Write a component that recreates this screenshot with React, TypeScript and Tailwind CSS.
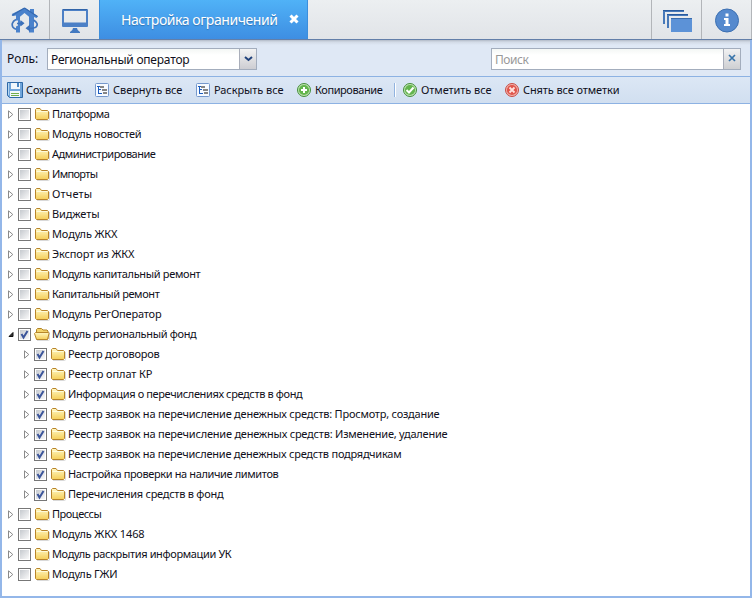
import { useLayoutEffect, useRef, useState } from 'react';

/* Text whose tracking is adjusted so that it fills a given width. */
function Label({ text, width, className = '' }: { text: string; width: number; className?: string }) {
  const ref = useRef<HTMLSpanElement>(null);
  const [spacing, setSpacing] = useState(0);
  useLayoutEffect(() => {
    const el = ref.current;
    if (!el) return;
    el.style.letterSpacing = '0px';
    const natural = el.getBoundingClientRect().width;
    const next = (width - 0.6 - natural) / text.length;
    el.style.letterSpacing = `${next}px`;
    setSpacing(next);
  }, [text, width]);
  return (
    <span className="inline-block shrink-0" style={{ width }}>
      <span ref={ref} className={`block w-max whitespace-pre ${className}`} style={{ letterSpacing: spacing }}>
        {text}
      </span>
    </span>
  );
}

function HouseIcon() {
  return (
    <svg width="28" height="27" viewBox="0 0 28 27" className="shrink-0">
      <path
        fill="#4a82cc"
        d="M.8 7 13.500 .8 19 4.300V2h4v4.800L27 9.500 25.500 11 23 10v15.500h-5V23l-2.500-1.800L18 19.200V9.800L13.500 6 9 9.800V14l4 2.300L9 19v6.500H5V19.500l2-1V13.500H5V8.500L2.200 9z"
      />
      <path d="M13.500 1 1 8.500M13.500 1 26.500 9.500" stroke="#3569b0" strokeWidth="1.200" fill="none" />
      <path d="M5 12.500C1 14.500 .5 18 2 20.200q1 1.300 3 2M6 16.500h5M22.500 13c3.500 2 4.500 4.500 3 6.500q-1.500 2-7.500 1.800" fill="none" stroke="#3f74bc" strokeWidth="1.700" />
      <path d="m9.500 13 4 3.300-4 3.200zM19 17.500l-4.500 3.700 4.500 3.300z" fill="#3b70ba" />
    </svg>
  );
}

function MonitorIcon() {
  return (
    <svg width="26" height="25" viewBox="0 0 26 25" className="shrink-0">
      <path fillRule="evenodd" fill="#4c80c6" d="M1 0h24q1 0 1 1v16q0 1-1 1H1q-1 0-1-1V1q0-1 1-1zm1 2v11.500h22V2z" />
      <path d="M1 .5h24" stroke="#3264a8" />
      <path fill="#4279c1" d="M11 19h4q0 2.500 3 4v1H8v-1q3-1.500 3-4z" />
    </svg>
  );
}

function WindowsIcon() {
  return (
    <svg width="30" height="24" viewBox="0 0 30 24" className="shrink-0">
      <path d="M1 14V1h20M5 18V5h20" fill="none" stroke="#4779b9" strokeWidth="2" />
      <path d="M0 .5h21M4 4.500h21" stroke="#295b9f" />
      <path d="M8 8h21v14H8z" fill="#5c92d7" />
      <path d="M8 8.500h21" stroke="#386bac" />
    </svg>
  );
}

function InfoIcon() {
  return (
    <svg width="24" height="25" viewBox="0 0 24 25" className="shrink-0">
      <circle cx="12" cy="12.500" r="11.500" fill="#568ace" stroke="#3d70b1" />
      <path d="M10.500 5.500h3v3h-3zM9 10h4.500v6H15v2H9v-2h1.500v-4H9z" fill="#fff" />
    </svg>
  );
}

function SaveIcon() {
  return (
    <svg width="16" height="16" viewBox="0 0 16 16" className="mr-[3px] shrink-0">
      <path d="M.5.5h15v15h-13l-2-2z" fill="#70a5da" stroke="#2e69a7" />
      <path d="M4 1h9v6H4zM3 9h10v6H3z" fill="#f2f8fc" />
      <path d="M10 1h2v4h-2z" fill="#4c88c3" />
      <path d="M4 11.500h8M4 13.500h8" stroke="#71ad4a" />
      <path d="M1.500 1v12" stroke="#b6d6f1" />
    </svg>
  );
}

function TreeIcon() {
  return (
    <svg width="14" height="14" viewBox="0 0 14 14" className="mr-[4px] shrink-0">
      <rect x=".5" y=".5" width="13" height="13" rx="1" fill="#f6faff" stroke="#7598cc" />
      <path d="M2 3h3v1H4v2h2v1H4v3h3v1H3V4H2z" fill="#1d5dbd" />
      <path d="M5 3h4v2H5zM7 6h5v2H7zM8 9h4v2H8z" fill="#858585" />
    </svg>
  );
}

function RoundIcon({ kind }: { kind: 'plus' | 'check' | 'cross' }) {
  const red = kind === 'cross';
  return (
    <svg width="14" height="14" viewBox="0 0 14 14" className="mr-[4px] shrink-0">
      <circle cx="7" cy="7" r="6.500" fill={red ? '#f2b3ac' : '#c0e2b2'} stroke={red ? '#c64c45' : '#438f3b'} />
      <circle cx="7" cy="7" r="5.100" fill={red ? '#df564c' : '#62b54d'} />
      {kind === 'plus' && <path d="M7 4v6M4 7h6" stroke="#fff" strokeWidth="2" />}
      {kind === 'check' && <path d="m3.500 7 2.500 2.500 4.500-5" fill="none" stroke="#fff" strokeWidth="2" />}
      {kind === 'cross' && <path d="m4.500 4.500 5 5m0-5-5 5" stroke="#ffe1dd" strokeWidth="1.800" />}
    </svg>
  );
}

function FolderIcon({ open }: { open?: boolean }) {
  return (
    <svg width="17" height="14" viewBox="0 0 17 14" className="-ml-px shrink-0">
      <defs>
        <linearGradient id="folder" x1="0" y1="0" x2="0" y2="1">
          <stop offset="0" stopColor="#fff8c4" />
          <stop offset="1" stopColor="#f5ce58" />
        </linearGradient>
      </defs>
      <path d="M3 13.500h11.500q1 0 1-1V5" fill="none" stroke="#d9d9d9" />
      {open ? (
        <>
          <path d="M2.500 11V2.500l1-1h4L9 3h4l1 1v8H2.500z" fill="#f3d36b" stroke="#b18326" />
          <path d="M.5 6.500l1-1h13l.5 1-1.500 6H2.500z" fill="url(#folder)" stroke="#b8872c" />
        </>
      ) : (
        <>
          <path d="M1.500 4V2.500l1-1H6l1.500 2h6l1 1v7l-1 1h-11l-1-1z" fill="url(#folder)" stroke="#b8842a" />
          <path d="M2.500 4.500h11" stroke="#fffbd8" />
        </>
      )}
    </svg>
  );
}

function Checkbox({ checked }: { checked?: boolean }) {
  return (
    <svg width="13" height="13" viewBox="0 0 13 13" className="mr-[4px] shrink-0">
      <defs>
        <linearGradient id="box" x1="0" y1="0" x2="1" y2="1">
          <stop offset="0" stopColor="#c5c9ce" />
          <stop offset="1" stopColor="#fafafa" />
        </linearGradient>
      </defs>
      <rect x=".5" y=".5" width="12" height="12" fill="#fff" stroke="#777" />
      <rect x="2" y="2" width="9" height="9" fill="url(#box)" />
      {checked && <path d="m3.500 6 2 3.500L9.500 3" fill="none" stroke="#3b559a" strokeWidth="2" />}
    </svg>
  );
}

function Arrow({ open }: { open?: boolean }) {
  return (
    <svg width="8" height="9" viewBox="0 0 8 9" className="mr-[3px] shrink-0">
      {open ? <path d="M6 2.500v4H2z" fill="#333" stroke="#111" /> : <path d="M1.500.8v7.400L5.800 4.500z" fill="#fff" stroke="#8a8a8a" />}
    </svg>
  );
}

type Item = { text: string; width: number; child?: boolean; open?: boolean };

const items: Item[] = [
  { text: 'Платформа', width: 58 },
  { text: 'Модуль новостей', width: 90 },
  { text: 'Администрирование', width: 104 },
  { text: 'Импорты', width: 46 },
  { text: 'Отчеты', width: 41 },
  { text: 'Виджеты', width: 48 },
  { text: 'Модуль ЖКХ', width: 66 },
  { text: 'Экспорт из ЖКХ', width: 83 },
  { text: 'Модуль капитальный ремонт', width: 149 },
  { text: 'Капитальный ремонт', width: 108 },
  { text: 'Модуль РегОператор', width: 110 },
  { text: 'Модуль региональный фонд', width: 145, open: true },
  { text: 'Реестр договоров', width: 92, child: true },
  { text: 'Реестр оплат КР', width: 85, child: true },
  { text: 'Информация о перечислениях средств в фонд', width: 235, child: true },
  { text: 'Реестр заявок на перечисление денежных средств: Просмотр, создание', width: 372, child: true },
  { text: 'Реестр заявок на перечисление денежных средств: Изменение, удаление', width: 380, child: true },
  { text: 'Реестр заявок на перечисление денежных средств подрядчикам', width: 334, child: true },
  { text: 'Настройка проверки на наличие лимитов', width: 211, child: true },
  { text: 'Перечисления средств в фонд', width: 156, child: true },
  { text: 'Процессы', width: 50 },
  { text: 'Модуль ЖКХ 1468', width: 93 },
  { text: 'Модуль раскрытия информации УК', width: 180 },
  { text: 'Модуль ГЖИ', width: 66 },
];

export default function App() {
  return (
    <div className="flex h-[598px] w-[752px] flex-col overflow-hidden bg-white font-['Noto_Sans','Open_Sans',sans-serif] text-[11px] text-[#101020]">
      <header className="flex h-10 shrink-0 border-b border-[#637fa9] bg-linear-to-b from-[#eceff1] to-[#e1e4e8]">
        <div className="flex w-[50px] items-start border-r border-[#b2b5b9] pt-[7px] pl-[11px]"><HouseIcon /></div>
        <div className="flex w-[49px] items-start pt-[9px] pl-[12px]"><MonitorIcon /></div>
        <div className="flex w-[209px] items-center border-x border-[#3c8edc] bg-linear-to-b from-[#50b2f7] to-[#3e8ee2] pb-px pl-[21px] text-[14px] text-white">
          <Label text="Настройка ограничений" width={157} className="[text-shadow:0_1px_1px_#3274b3]" />
          <svg width="10" height="10" viewBox="0 0 10 10" className="ml-[11px]">
            <path d="m1.500 1.500 7 7m0-7-7 7" stroke="white" strokeWidth="3" />
          </svg>
        </div>
        <div className="flex-1" />
        <div className="flex w-[50px] items-start border-l border-[#b2b5b9] pt-[10px] pl-[11px]"><WindowsIcon /></div>
        <div className="flex w-[51px] items-start border-x border-[#b2b5b9] pt-[8px] pl-[13px]"><InfoIcon /></div>
      </header>

      <div className="flex min-h-0 flex-1 flex-col border-x-2 border-b-2 border-[#94b7e9]">
        <div className="flex h-9 shrink-0 items-start bg-[#dfe8f5] bg-[linear-gradient(#b2bac7,#d2dae6_2px,#dfe8f5_5px)] pt-2">
          <span className="ml-[5px]"><Label text="Роль:" width={32} className="text-[12px] leading-[22px]" /></span>
          <div className="ml-[8px] flex h-[22px] w-[210px] border border-[#a3adbd] bg-linear-to-b from-[#f4f7f5] to-white to-30% pl-[3px]">
            <Label text="Региональный оператор" width={139} className="text-[12px] leading-[21px]" />
            <div className="ml-auto flex w-[17px] items-center justify-center border-l border-[#a9aeba] bg-linear-to-b from-[#f3f3f3] to-[#cdcdd2]">
              <svg width="9" height="6" viewBox="0 0 9 6"><path d="m1 1 3.500 3L8 1" fill="none" stroke="#21427b" strokeWidth="2" /></svg>
            </div>
          </div>
          <div className="mr-[9px] ml-auto flex h-[22px] w-[250px] border border-[#a3adbd] bg-linear-to-b from-[#f4f7f5] to-white to-30% pl-[3px]">
            <Label text="Поиск" width={34} className="text-[12px] leading-[21px] text-[#999]" />
            <div className="ml-auto flex w-[17px] justify-center border-l border-[#a9aeba] bg-linear-to-b from-[#f1f1f2] to-[#cecfd2] pt-[5px]">
              <svg width="8" height="8" viewBox="0 0 8 8"><path d="m1 1 6 6m0-6L1 7" stroke="#3773aa" strokeWidth="1.700" /></svg>
            </div>
          </div>
        </div>

        <div className="flex h-7 shrink-0 items-center border-y border-[#8db2e3] bg-linear-to-b from-[#dce7f5] to-[#d1dff0] pl-[5px]">
          <SaveIcon /><Label text="Сохранить" width={56} />
          <span className="ml-[13px] flex items-center"><TreeIcon /><Label text="Свернуть все" width={70} /></span>
          <span className="ml-[13px] flex items-center"><TreeIcon /><Label text="Раскрыть все" width={70} /></span>
          <span className="ml-[13px] flex items-center"><RoundIcon kind="plus" /><Label text="Копирование" width={68} /></span>
          <span className="ml-[11px] h-[14px] w-[2px] border-l border-[#91b3df] bg-white" />
          <span className="ml-[7px] flex items-center"><RoundIcon kind="check" /><Label text="Отметить все" width={71} /></span>
          <span className="ml-[13px] flex items-center"><RoundIcon kind="cross" /><Label text="Снять все отметки" width={97} /></span>
        </div>

        <div className="flex flex-col">
          {items.map((item) => (
            <div key={item.text} className={`flex h-5 items-center ${item.child ? 'pl-[21px]' : 'pl-[5px]'}`}>
              <Arrow open={item.open} />
              <Checkbox checked={item.child || item.open} />
              <FolderIcon open={item.open} />
              <span className="ml-px flex"><Label text={item.text} width={item.width} className="leading-5" /></span>
            </div>
          ))}
        </div>
      </div>
    </div>
  );
}
